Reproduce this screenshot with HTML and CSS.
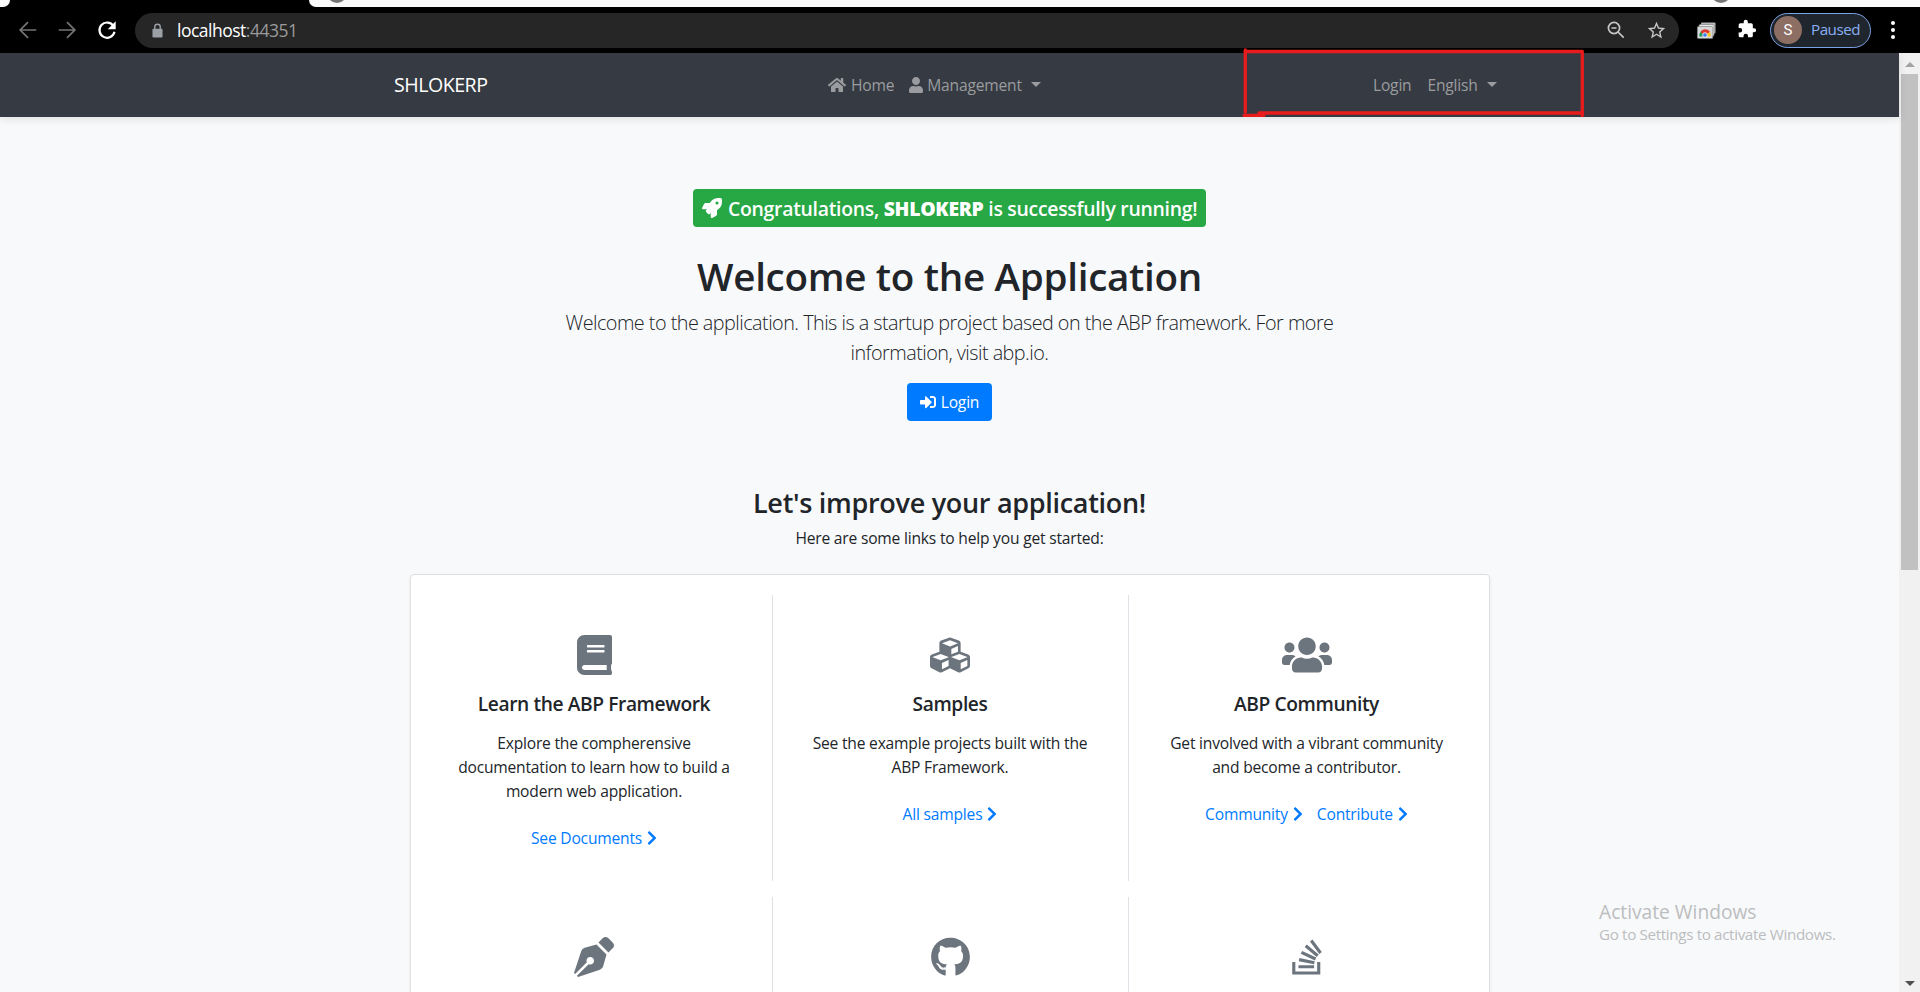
FILE: index.html
```html
<!DOCTYPE html>
<html lang="en">
<head>
<meta charset="utf-8">
<title>SHLOKERP</title>
<link rel="stylesheet" href="styles.css">
</head>
<body>
<div class="tabstrip">
  <span class="tab-left"></span>
  <span class="tab-right"><i class="tab-dot dot-first"></i><i class="tab-dot dot-last"></i></span>
</div>
<div class="toolbar">
  <svg class="tool back" viewBox="0 0 24 24"><path d="M21 12H4M12 3.500L3.500 12l8.500 8.500"/></svg>
  <svg class="tool forward" viewBox="0 0 24 24"><path d="M3 12h17M12 3.500l8.500 8.500-8.500 8.500"/></svg>
  <svg class="tool reload" viewBox="0 0 24 24"><path d="M19 7.500A8.300 8.300 0 1 0 20.200 14"/><path class="solid" d="M21.500 2.500v8.700h-8.700z"/></svg>
  <div class="address">
    <svg class="lock" viewBox="0 0 12 16"><path d="M3 7V4.200a3 3 0 0 1 6 0V7" fill="none" stroke="#9aa0a6" stroke-width="1.500"/><rect x="0.500" y="6" width="11" height="9.500" rx="1.300" fill="#9aa0a6"/></svg>
    <span class="url">localhost<span class="port">:44351</span></span>
    <svg class="zoomout" viewBox="0 0 18 18"><circle cx="7" cy="7" r="5.600"/><path d="M4.500 7h5M11 11l5.700 5.700"/></svg>
    <svg class="star" viewBox="0 0 24 24"><path d="M22 9.240l-7.190-.62L12 2 9.190 8.630 2 9.240l5.460 4.730L5.820 21 12 17.270 18.180 21l-1.630-7.030L22 9.240zM12 15.400l-3.760 2.270 1-4.280-3.320-2.880 4.380-.38L12 6.100l1.710 4.040 4.380.38-3.320 2.880 1 4.280L12 15.400z"/></svg>
  </div>
  <svg class="cast" viewBox="0 0 19 17"><rect x="4" y="0.500" width="14.500" height="11" rx="1" fill="#b5b8bb"/><rect x="2" y="2.500" width="15" height="11.500" rx="1" fill="#e8e8e8" stroke="#777" stroke-width=".6"/><rect x="0.300" y="4.500" width="15.500" height="12" rx="1" fill="#d5d7d9" stroke="#777" stroke-width=".6"/><path d="M2.500 14.500a5.500 5.500 0 0 1 1.700-5.300L8 14.500z" fill="#1e9c55"/><path d="M3.500 10a5.500 5.500 0 0 1 9.500 0l-2.800 2H5.800z" fill="#e03b30"/><path d="M13 10a5.500 5.500 0 0 1 .5 4.500H9.500l1-3z" fill="#f7c51e"/><circle cx="8" cy="13" r="2.300" fill="#3b7ded" stroke="#fff" stroke-width=".8"/></svg>
  <svg class="puzzle" viewBox="0 0 24 24"><path d="M20.500 11H19V7a2 2 0 0 0-2-2h-4V3.500a2.500 2.500 0 0 0-5 0V5H4a2 2 0 0 0-2 2v3.800h1.500a2.700 2.700 0 0 1 0 5.400H2V20a2 2 0 0 0 2 2h3.800v-1.500a2.700 2.700 0 0 1 5.400 0V22H17a2 2 0 0 0 2-2v-4h1.500a2.500 2.500 0 0 0 0-5z"/></svg>
  <div class="profile"><span class="avatar">S</span><span class="paused">Paused</span></div>
  <div class="dots"><i></i><i></i><i></i></div>
</div>
<div class="viewport">
  <div class="page">
    <nav class="navbar">
      <span class="brand">SHLOKERP</span>
      <div class="menu">
        <a><svg class="i-home" viewBox="0 0 576 512"><path d="M280.370 148.260L96 300.110V464a16 16 0 0 0 16 16l112.060-.29a16 16 0 0 0 15.920-16V368a16 16 0 0 1 16-16h64a16 16 0 0 1 16 16v95.640a16 16 0 0 0 16 16.050L464 480a16 16 0 0 0 16-16V300L295.670 148.260a12.190 12.190 0 0 0-15.300 0zM571.600 251.470L488 182.560V44.050a12 12 0 0 0-12-12h-56a12 12 0 0 0-12 12v72.610L318.470 43a48 48 0 0 0-61 0L4.340 251.470a12 12 0 0 0-1.600 16.900l25.500 31A12 12 0 0 0 45.150 301l235.220-193.740a12.190 12.190 0 0 1 15.300 0L530.900 301a12 12 0 0 0 16.900-1.600l25.500-31a12 12 0 0 0-1.700-16.930z"/></svg><span>Home</span></a>
        <a><svg class="i-user" viewBox="0 0 448 512"><path d="M224 256c70.700 0 128-57.300 128-128S294.700 0 224 0 96 57.300 96 128s57.300 128 128 128zm89.600 32h-16.700c-22.200 10.200-46.900 16-72.900 16s-50.600-5.800-72.900-16h-16.700C60.200 288 0 348.200 0 422.400V464c0 26.500 21.500 48 48 48h352c26.500 0 48-21.500 48-48v-41.600c0-74.200-60.200-134.400-134.400-134.400z"/></svg><span>Management</span><i class="caret"></i></a>
      </div>
      <div class="account"><a><span>Login</span></a><a><span>English</span><i class="caret"></i></a></div>
      <svg class="marker" viewBox="0 0 348 74"><path d="M4.300 3v62M4 4.500h337M341.300 4.500v64M18 66h323M3 68.300h20"/></svg>
    </nav>
    <main>
      <div class="badge"><svg viewBox="0 0 512 512"><path d="M505.120 19.094c-1.190-5.531-6.658-11-12.207-12.187C460.716 0 435.507 0 410.407 0 307.175 0 245.269 55.203 199.052 128H94.838c-16.348.016-35.557 11.875-42.887 26.484L2.516 253.297A28.400 28.400 0 0 0 0 264a24 24 0 0 0 24 24h103.810l-22.470 22.469c-11.365 11.361-12.996 32.258 0 45.250l50.900 50.906c11.156 11.188 32.156 13.156 45.277 0l22.475-22.469V488a24 24 0 0 0 24 24 28.560 28.560 0 0 0 10.707-2.516l98.728-49.390c14.629-7.297 26.508-26.500 26.508-42.860V312.797c72.598-46.313 128.035-108.406 128.035-211.094C512.075 76.500 512.075 51.297 505.120 19.094zM384.040 168a40 40 0 1 1 40-40 40 40 0 0 1-40 40z"/></svg><span>Congratulations, <b>SHLOKERP</b> is successfully running!</span></div>
      <h1>Welcome to the Application</h1>
      <p class="lead">Welcome to the application. This is a startup project based on the ABP framework. For more<br>information, visit abp.io.</p>
      <a class="button"><svg viewBox="0 0 512 512"><path d="M416 448h-84c-6.600 0-12-5.400-12-12v-40c0-6.600 5.400-12 12-12h84c17.700 0 32-14.300 32-32V160c0-17.700-14.300-32-32-32h-84c-6.600 0-12-5.400-12-12V76c0-6.600 5.400-12 12-12h84c53 0 96 43 96 96v192c0 53-43 96-96 96zm-47-201L201 79c-15-15-41-4.500-41 17v96H24c-13.300 0-24 10.700-24 24v96c0 13.300 10.700 24 24 24h136v96c0 21.500 26 32 41 17l168-168c9.300-9.400 9.300-24.600 0-34z"/></svg><span>Login</span></a>
      <h3>Let's improve your application!</h3>
      <p class="sub">Here are some links to help you get started:</p>
      <div class="card">
        <section class="cell">
          <svg class="icon w35" viewBox="0 0 448 512"><path d="M448 360V24c0-13.300-10.700-24-24-24H96C43 0 0 43 0 96v320c0 53 43 96 96 96h328c13.300 0 24-10.700 24-24v-16c0-7.500-3.500-14.300-8.900-18.700-4.200-15.400-4.200-59.300 0-74.700 5.400-4.300 8.900-11.100 8.900-18.600zM128 134c0-3.300 2.700-6 6-6h212c3.300 0 6 2.700 6 6v20c0 3.300-2.700 6-6 6H134c-3.300 0-6-2.700-6-6v-20zm0 64c0-3.300 2.700-6 6-6h212c3.300 0 6 2.700 6 6v20c0 3.300-2.700 6-6 6H134c-3.300 0-6-2.700-6-6v-20zm253.400 250H96c-17.700 0-32-14.300-32-32 0-17.600 14.400-32 32-32h285.400c-1.900 17.100-1.900 46.900 0 64z"/></svg>
          <h5>Learn the ABP Framework</h5>
          <p>Explore the compherensive<br>documentation to learn how to build a<br>modern web application.</p>
          <div class="links"><a>See Documents<svg viewBox="0 0 320 512"><path d="M285.476 272.971L91.132 467.314c-9.373 9.373-24.569 9.373-33.941 0l-22.667-22.667c-9.357-9.357-9.375-24.522-.04-33.901L188.505 256 34.484 101.255c-9.335-9.379-9.317-24.544.04-33.901l22.667-22.667c9.373-9.373 24.569-9.373 33.941 0L285.475 239.030c9.373 9.372 9.373 24.568.001 33.941z"/></svg></a></div>
        </section>
        <section class="cell">
          <svg class="icon w40" viewBox="0 0 512 512"><path d="M488.600 250.200L392 214V105.500c0-15-9.300-28.400-23.400-33.700l-100-37.500c-8.100-3.100-17.100-3.100-25.300 0l-100 37.500c-14.100 5.300-23.400 18.700-23.400 33.700V214l-96.600 36.200C9.300 255.500 0 268.900 0 283.900V394c0 13.600 7.700 26.100 19.900 32.200l100 50c10.100 5.100 22.100 5.100 32.200 0l103.900-52 103.900 52c10.100 5.100 22.100 5.100 32.200 0l100-50c12.200-6.100 19.900-18.600 19.900-32.200V283.900c0-15-9.300-28.400-23.400-33.700zM358 214.800l-85 31.900v-68.200l85-37v73.300zM154 104.100l102-38.200 102 38.200v.6l-102 41.400-102-41.400v-.6zm84 291.100l-85 42.500v-79.100l85-38.800v75.400zm0-112l-102 41.400-102-41.400v-.6l102-38.200 102 38.200v.6zm240 112l-85 42.500v-79.100l85-38.800v75.400zm0-112l-102 41.400-102-41.400v-.6l102-38.200 102 38.200v.6z"/></svg>
          <h5>Samples</h5>
          <p>See the example projects built with the<br>ABP Framework.</p>
          <div class="links"><a>All samples<svg viewBox="0 0 320 512"><path d="M285.476 272.971L91.132 467.314c-9.373 9.373-24.569 9.373-33.941 0l-22.667-22.667c-9.357-9.357-9.375-24.522-.04-33.901L188.505 256 34.484 101.255c-9.335-9.379-9.317-24.544.04-33.901l22.667-22.667c9.373-9.373 24.569-9.373 33.941 0L285.475 239.030c9.373 9.372 9.373 24.568.001 33.941z"/></svg></a></div>
        </section>
        <section class="cell">
          <svg class="icon w50" viewBox="0 0 640 512"><path d="M96 224c35.300 0 64-28.700 64-64s-28.700-64-64-64-64 28.700-64 64 28.700 64 64 64zm448 0c35.300 0 64-28.700 64-64s-28.700-64-64-64-64 28.700-64 64 28.700 64 64 64zm32 32h-64c-17.600 0-33.500 7.100-45.100 18.600 40.300 22.100 68.900 62 75.100 109.400h66c17.700 0 32-14.300 32-32v-32c0-35.300-28.700-64-64-64zm-256 0c61.900 0 112-50.100 112-112S381.900 32 320 32 208 82.100 208 144s50.100 112 112 112zm76.800 32h-8.300c-20.800 10-43.900 16-68.500 16s-47.600-6-68.500-16h-8.300C179.600 288 128 339.600 128 403.200V432c0 26.500 21.500 48 48 48h288c26.500 0 48-21.500 48-48v-28.800c0-63.600-51.600-115.200-115.200-115.200zm-223.700-13.400C161.500 263.100 145.600 256 128 256H64c-35.300 0-64 28.700-64 64v32c0 17.700 14.300 32 32 32h65.900c6.300-47.400 34.900-87.300 75.200-109.400z"/></svg>
          <h5>ABP Community</h5>
          <p>Get involved with a vibrant community<br>and become a contributor.</p>
          <div class="links"><a>Community<svg viewBox="0 0 320 512"><path d="M285.476 272.971L91.132 467.314c-9.373 9.373-24.569 9.373-33.941 0l-22.667-22.667c-9.357-9.357-9.375-24.522-.04-33.901L188.505 256 34.484 101.255c-9.335-9.379-9.317-24.544.04-33.901l22.667-22.667c9.373-9.373 24.569-9.373 33.941 0L285.475 239.030c9.373 9.372 9.373 24.568.001 33.941z"/></svg></a><a>Contribute<svg viewBox="0 0 320 512"><path d="M285.476 272.971L91.132 467.314c-9.373 9.373-24.569 9.373-33.941 0l-22.667-22.667c-9.357-9.357-9.375-24.522-.04-33.901L188.505 256 34.484 101.255c-9.335-9.379-9.317-24.544.04-33.901l22.667-22.667c9.373-9.373 24.569-9.373 33.941 0L285.475 239.030c9.373 9.372 9.373 24.568.001 33.941z"/></svg></a></div>
        </section>
        <section class="cell">
          <svg class="icon w40" viewBox="0 0 512 512"><path d="M136.600 138.790a64 64 0 0 0-43.310 41.350L0 460l14.690 14.690L164.800 324.580c-2.990-6.260-4.800-13.180-4.800-20.580 0-26.510 21.490-48 48-48s48 21.490 48 48-21.490 48-48 48c-7.400 0-14.320-1.810-20.580-4.800L37.310 497.310 52 512l279.860-93.290a64 64 0 0 0 41.350-43.310L416 224 288 96l-151.400 42.790zm361.340-64.620l-60.110-60.110c-18.750-18.750-49.160-18.750-67.910 0l-56.550 56.550 128.020 128.020 56.550-56.550c18.750-18.750 18.750-49.150 0-67.910z"/></svg>
        </section>
        <section class="cell">
          <svg class="icon w39" viewBox="0 0 496 512"><path d="M165.900 397.400c0 2-2.300 3.600-5.200 3.600-3.300.3-5.600-1.300-5.600-3.600 0-2 2.300-3.600 5.200-3.600 3-.3 5.600 1.300 5.600 3.600zm-31.100-4.500c-.7 2 1.300 4.300 4.300 4.900 2.600 1 5.600 0 6.200-2s-1.300-4.300-4.300-5.200c-2.600-.7-5.500.3-6.200 2.300zm44.200-1.700c-2.900.7-4.900 2.600-4.600 4.900.3 2 2.900 3.300 5.900 2.600 2.900-.7 4.900-2.600 4.600-4.600-.3-1.900-3-3.200-5.900-2.900zM244.800 8C106.100 8 0 113.300 0 252c0 110.900 69.800 205.800 169.500 239.200 12.800 2.300 17.300-5.600 17.300-12.100 0-6.200-.3-40.400-.3-61.400 0 0-70 15-84.700-29.800 0 0-11.400-29.100-27.800-36.600 0 0-22.900-15.700 1.600-15.400 0 0 24.900 2 38.600 25.800 21.900 38.600 58.600 27.500 72.900 20.900 2.300-16 8.800-27.100 16-33.700-55.900-6.200-112.300-14.300-112.300-110.500 0-27.500 7.600-41.300 23.600-58.900-2.600-6.500-11.100-33.300 2.600-67.900 20.900-6.500 69 27 69 27 20-5.600 41.500-8.500 62.800-8.500s42.800 2.900 62.800 8.500c0 0 48.100-33.600 69-27 13.700 34.700 5.200 61.400 2.600 67.900 16 17.700 25.800 31.500 25.800 58.900 0 96.500-58.900 104.200-114.800 110.500 9.200 7.900 17 22.900 17 46.400 0 33.700-.3 75.400-.3 83.600 0 6.500 4.600 14.400 17.300 12.100C428.200 457.800 496 362.900 496 252 496 113.300 383.500 8 244.800 8z"/></svg>
        </section>
        <section class="cell">
          <svg class="icon w30" viewBox="0 0 384 512"><path d="M290.700 311L95 269.700 86.800 309l195.700 41zm51-87L188.200 95.700l-25.500 30.800 153.500 128.300zm-31.200 39.700L129.200 179l-16.700 36.500L293.700 300zM262 32l-32 24 119.300 160.300 32-24zm20.500 328h-200v39.700h200zm39.700 80H42.700V320h-40v160h359.500V320h-40z"/></svg>
        </section>
      </div>
    </main>
  </div>
  <div class="scrollbar"><i class="up"></i><div class="thumb"></div><i class="down"></i></div>
</div>
<div class="watermark"><div class="wm1">Activate Windows</div><div class="wm2">Go to Settings to activate Windows.</div></div>
</body>
</html>
```
FILE: styles.css
```css
* { box-sizing: border-box; }
body { margin: 0; height: 992px; overflow: hidden; display: flex; flex-direction: column; background: #000; font-family: "Open Sans", "Noto Sans", sans-serif; font-size: 15.6px; letter-spacing: -0.2px; line-height: 24px; color: #212529; }
h1, h3, h5, p { margin: 0; white-space: nowrap; }
svg { display: block; flex: none; }

.tabstrip { height: 7px; display: flex; justify-content: space-between; flex: none; }
.tab-left { width: 10px; background: #fafafa; border-bottom-right-radius: 8px; }
.tab-right { width: 1611px; background: #fafafa; border-bottom-left-radius: 8px; position: relative; overflow: hidden; }
.tab-dot { position: absolute; top: -17px; width: 20px; height: 20px; border-radius: 50%; background: #757575; }
.dot-first { left: 18px; }
.dot-last { left: 1402px; }

.toolbar { height: 46px; flex: none; display: flex; align-items: center; padding-left: 17px; background: #000; }
.tool { width: 22px; height: 22px; fill: none; stroke-width: 1.9; margin-top: -1px; }
.back, .forward { stroke: #747474; }
.forward { margin-left: 17px; }
.reload { margin-left: 18px; stroke: #fff; stroke-width: 2.4; }
.reload .solid { fill: #fff; stroke: none; }
.address { flex: none; margin-left: 17px; width: 1544px; height: 35px; border-radius: 18px; background: #262626; display: flex; align-items: center; padding: 0 12px 0 17px; }
.lock { width: 11px; height: 15px; margin-top: 1px; }
.url { margin-left: 14px; font-size: 17.5px; letter-spacing: -0.5px; color: #fff; flex: 1; }
.port { color: #9a9a9a; }
.zoomout { width: 18px; height: 18px; fill: none; stroke: #c4c6c8; stroke-width: 1.7; }
.star { width: 21px; height: 21px; margin-left: 21px; fill: #c4c6c8; }
.cast { width: 19px; height: 17px; margin-left: 18px; }
.puzzle { width: 20px; height: 20px; margin: -2px 0 0 21px; fill: #fff; }
.profile { margin-left: 13px; width: 101px; height: 35px; border: 1.5px solid #7ba2e6; border-radius: 18px; background: #20262e; display: flex; align-items: center; padding-left: 3px; }
.avatar { width: 28px; height: 28px; border-radius: 50%; background: #8d6e63; color: #fff; font-family: Roboto, sans-serif; font-size: 15px; letter-spacing: 0; line-height: 28px; text-align: center; }
.paused { margin: -3px 0 0 9px; color: #8ab0f3; font-size: 15.2px; letter-spacing: -0.5px; }
.dots { margin: -1px 0 0 20px; display: flex; flex-direction: column; gap: 3px; }
.dots i { width: 4px; height: 4px; border-radius: 50%; background: #fff; }

.viewport { flex: 1; min-height: 0; display: flex; }
.page { width: 1899px; background: #f8f9fb; display: flex; flex-direction: column; }
.navbar { position: relative; flex: none; height: 64px; background: #363a42; box-shadow: 0 2px 8px rgba(0,0,0,.1); padding: 0 394px; display: flex; align-items: center; color: #9a9c9f; z-index: 1; }
.brand { width: 434px; color: #fff; font-size: 19.6px; letter-spacing: -0.5px; }
.menu, .account { display: flex; align-items: center; }
.menu { width: 545px; gap: 15px; }
.account { gap: 16px; }
.navbar a { display: flex; align-items: center; }
.navbar a svg { fill: #9a9c9f; height: 16px; margin-top: -1px; }
.i-home { width: 18px; margin-right: 5px; }
.i-user { width: 14px; margin-right: 4px; }
.caret { border: 5px solid transparent; border-top-color: #9a9c9f; border-bottom: 0; margin: -1px 0 0 9px; }
.marker { position: absolute; left: 1241px; top: -6px; width: 348px; height: 74px; fill: none; stroke: #e81c1c; stroke-width: 3.3; stroke-linecap: round; }

main { flex: 1; display: flex; flex-direction: column; align-items: center; padding-top: 72px; min-height: 0; overflow: hidden; text-align: center; }
.badge { flex: none; width: 513px; height: 38px; border-radius: 4px; background: #28a745; color: #fff; display: flex; align-items: center; padding-left: 9px; font-size: 19.4px; font-weight: 600; white-space: nowrap; letter-spacing: -0.28px; }
.badge svg { width: 20px; height: 20px; fill: #fff; margin-right: 6px; }
.badge span { margin-top: 1px; }
h1 { margin-top: 25px; font-size: 38.6px; font-weight: 600; letter-spacing: -0.3px; line-height: 48px; }
.lead { margin-top: 8px; font-size: 19.8px; font-weight: 300; letter-spacing: -0.52px; line-height: 30px; }
.button { flex: none; margin-top: 15px; width: 85px; height: 38px; border-radius: 4px; background: #007bff; color: #fff; display: flex; align-items: center; justify-content: center; }
.button svg { width: 16px; height: 16px; fill: #fff; margin-right: 5px; }
h3 { margin-top: 65px; font-size: 27px; font-weight: 600; letter-spacing: -0.3px; line-height: 34px; }
.sub { margin-top: 6px; }
.card { flex: none; margin-top: 24px; width: 1080px; height: 900px; border: 1px solid #dedfe1; border-radius: 4px; background: #fff; box-shadow: 0 2px 4px rgba(0,0,0,.06); padding: 20px 0 20px 6px; display: grid; grid-template-columns: repeat(3, 356px); grid-auto-rows: 286px; row-gap: 16px; align-content: start; }
.cell { padding-top: 40px; display: flex; flex-direction: column; align-items: center; border-right: 1px solid #dee2e6; }
.cell:nth-child(3n) { border-right: 0; }
.icon { height: 40px; fill: #6c757d; }
.w30 { width: 30px; } .w35 { width: 35px; } .w39 { width: 39px; } .w40 { width: 40px; } .w50 { width: 50px; }
h5 { margin-top: 16px; font-size: 19.2px; font-weight: 600; letter-spacing: -0.4px; line-height: 26px; }
.cell p { margin-top: 14px; }
.links { margin-top: 23px; display: flex; gap: 14px; color: #007bff; }
.links a { display: flex; align-items: center; }
.links svg { width: 10px; height: 16px; margin-left: 5px; fill: #007bff; }

.scrollbar { width: 21px; background: #f1f1f1; display: flex; flex-direction: column; align-items: center; }
.up { border: 5px solid transparent; border-top: 0; border-bottom-color: #a3a3a3; margin-top: 9px; }
.thumb { width: 17px; height: 496px; margin-top: 7px; background: #c1c1c1; }
.down { border: 5px solid transparent; border-bottom: 0; border-top-color: #505050; margin: auto 0 6px; }

.watermark { position: absolute; left: 1599px; top: 900px; color: #bcbdbf; white-space: nowrap; }
.wm1 { font-size: 19.2px; letter-spacing: 0; }
.wm2 { font-size: 15.2px; letter-spacing: -0.35px; line-height: 21px; }
```
